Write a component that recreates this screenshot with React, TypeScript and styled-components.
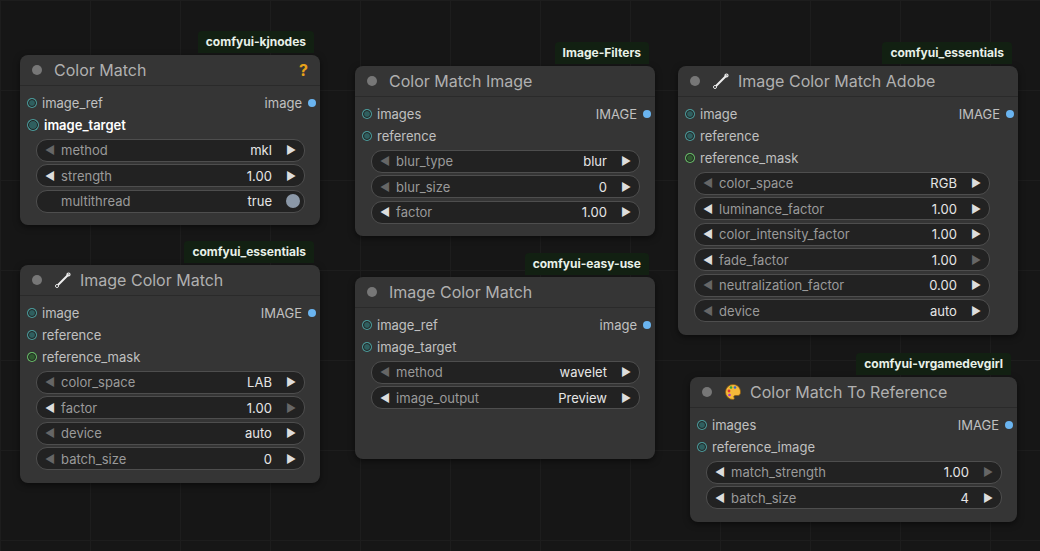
import React from 'react';
import styled, { createGlobalStyle } from 'styled-components';

const Global = createGlobalStyle`
  body { margin: 0; background: #151515; font-family: Inter, "Noto Sans", sans-serif; }
`;

const Canvas = styled.div`
  position: relative;
  width: 1040px;
  height: 551px;
  overflow: hidden;
  background-color: #161616;
  background-image:
    linear-gradient(#1d1d1d 1px, transparent 1px),
    linear-gradient(90deg, #1d1d1d 1px, transparent 1px);
  background-size: 90px 90px;
`;

const Node = styled.div<{ $x: number; $y: number; $w: number }>`
  position: absolute;
  left: ${p => p.$x}px;
  top: ${p => p.$y}px;
  width: ${p => p.$w}px;
  background: #353535;
  border-radius: 8px;
  box-shadow: 0 2px 6px rgba(0,0,0,0.5);
  padding-bottom: 10px;
`;

const Badge = styled.div`
  position: absolute;
  right: 6px;
  top: -24px;
  background: #122012;
  color: #e8f0e8;
  font-size: 12px;
  font-weight: 700;
  padding: 3px 8px 4px;
  border-radius: 4px 4px 0 0;
`;

const Title = styled.div`
  display: flex;
  align-items: center;
  gap: 8px;
  height: 30px;
  padding: 0 12px;
  border-bottom: 1px solid #2a2a2a;
  color: #b0b0b0;
  font-size: 16px;
  margin-bottom: 6px;
`;

const Dot = styled.span`
  width: 10px;
  height: 10px;
  border-radius: 50%;
  background: #777;
  margin-right: 4px;
`;

const Help = styled.span`
  margin-left: auto;
  color: #e7a21a;
  font-weight: 700;
  font-size: 16px;
`;

const Slot = styled.div`
  display: flex;
  align-items: center;
  height: 22px;
  padding: 0 8px;
  color: #c0c0c0;
  font-size: 13px;
`;

const Pin = styled.span<{ $c: string; $ring: string; $big?: boolean }>`
  width: ${p => (p.$big ? 8 : 6)}px;
  height: ${p => (p.$big ? 8 : 6)}px;
  border-radius: 50%;
  background: ${p => p.$c};
  border: 1.5px solid #222;
  margin-right: 6px;
  box-shadow: 0 0 0 1px ${p => p.$ring};
`;

const Out = styled.span`
  margin-left: auto;
  display: flex;
  align-items: center;
  gap: 6px;
  &::after {
    content: '';
    width: 8px;
    height: 8px;
    border-radius: 50%;
    background: #6ab4f0;
    margin-right: -4px;
  }
`;

const Widget = styled.div<{ $mr: number }>`
  display: flex;
  align-items: center;
  height: 21px;
  margin: 2.5px ${p => p.$mr}px 2.5px 16px;
  padding: 0 8px;
  background: #222;
  border: 1px solid #4e4e4e;
  border-radius: 11px;
  font-size: 13px;
  color: #9a9a9a;
  gap: 6px;
`;

const Arrow = styled.span<{ $dim?: boolean }>`
  color: ${p => (p.$dim ? '#666' : '#ddd')};
  font-size: 11px;
`;

const Val = styled.span`
  margin-left: auto;
  color: #e6e6e6;
  margin-right: 8px;
`;

const Toggle = styled.span`
  width: 14px;
  height: 14px;
  border-radius: 50%;
  background: #8b98a8;
  margin-right: -4px;
`;

const Wrench = () => (
  <svg width="18" height="18" viewBox="0 0 18 18">
    <path d="M3 15 L14 4" stroke="#eee" strokeWidth="2" strokeLinecap="round" />
    <circle cx="14.5" cy="3.5" r="1.5" fill="none" stroke="#eee" strokeWidth="1.2" />
    <circle cx="3" cy="15" r="1.5" fill="#111" stroke="#eee" strokeWidth="1" />
  </svg>
);

const Palette = () => (
  <svg width="18" height="18" viewBox="0 0 18 18">
    <path d="M9 1.5a7.5 7.5 0 1 0 0 15c1.5 0 1.6-1.3 1-2-.6-.8 0-2 1.2-2H14c1.6 0 2.5-1.3 2.5-3.5C16.5 4.5 13.2 1.5 9 1.5z" fill="#f5b93a" stroke="#8a5a10" strokeWidth="0.8" />
    <circle cx="5" cy="8" r="1.4" fill="#d33" />
    <circle cx="7" cy="4.5" r="1.3" fill="#3a3" />
    <circle cx="11" cy="4.5" r="1.3" fill="#36c" />
    <circle cx="5.5" cy="12" r="1.3" fill="#a3c" />
  </svg>
);

type W = { n: string; v: string; rDim?: boolean; lDim?: boolean; toggle?: boolean };
type S = { n: string; mask?: boolean; big?: boolean; out?: string };
type N = { x: number; y: number; w: number; mr?: number; badge: string; title: string; icon?: React.ReactNode; help?: boolean; slots: S[]; widgets: W[]; minH?: number };

const nodes: N[] = [
  { x: 20, y: 55, w: 300, badge: 'comfyui-kjnodes', title: 'Color Match', help: true,
    slots: [{ n: 'image_ref', out: 'image' }, { n: 'image_target', big: true }],
    widgets: [{ n: 'method', v: 'mkl', lDim: true }, { n: 'strength', v: '1.00' }, { n: 'multithread', v: 'true', toggle: true }] },
  { x: 20, y: 265, w: 300, badge: 'comfyui_essentials', title: 'Image Color Match', icon: <Wrench />,
    slots: [{ n: 'image', out: 'IMAGE' }, { n: 'reference' }, { n: 'reference_mask', mask: true }],
    widgets: [{ n: 'color_space', v: 'LAB', lDim: true }, { n: 'factor', v: '1.00', rDim: true }, { n: 'device', v: 'auto', lDim: true }, { n: 'batch_size', v: '0', lDim: true }] },
  { x: 355, y: 66, w: 300, badge: 'Image-Filters', title: 'Color Match Image',
    slots: [{ n: 'images', out: 'IMAGE' }, { n: 'reference' }],
    widgets: [{ n: 'blur_type', v: 'blur', lDim: true }, { n: 'blur_size', v: '0', lDim: true }, { n: 'factor', v: '1.00' }] },
  { x: 355, y: 277, w: 300, badge: 'comfyui-easy-use', title: 'Image Color Match', minH: 172,
    slots: [{ n: 'image_ref', out: 'image' }, { n: 'image_target' }],
    widgets: [{ n: 'method', v: 'wavelet', lDim: true }, { n: 'image_output', v: 'Preview' }] },
  { x: 678, y: 66, w: 340, mr: 28, badge: 'comfyui_essentials', title: 'Image Color Match Adobe', icon: <Wrench />,
    slots: [{ n: 'image', out: 'IMAGE' }, { n: 'reference' }, { n: 'reference_mask', mask: true }],
    widgets: [{ n: 'color_space', v: 'RGB', lDim: true }, { n: 'luminance_factor', v: '1.00' }, { n: 'color_intensity_factor', v: '1.00' }, { n: 'fade_factor', v: '1.00', rDim: true }, { n: 'neutralization_factor', v: '0.00', lDim: true }, { n: 'device', v: 'auto', lDim: true }] },
  { x: 690, y: 377, w: 327, badge: 'comfyui-vrgamedevgirl', title: 'Color Match To Reference', icon: <Palette />,
    slots: [{ n: 'images', out: 'IMAGE' }, { n: 'reference_image' }],
    widgets: [{ n: 'match_strength', v: '1.00', rDim: true }, { n: 'batch_size', v: '4' }] },
];

export default function App() {
  return (
    <Canvas>
      <Global />
      {nodes.map(nd => (
        <Node key={nd.x + nd.title} $x={nd.x} $y={nd.y} $w={nd.w} style={nd.minH ? { minHeight: nd.minH } : undefined}>
          <Badge>{nd.badge}</Badge>
          <Title>
            <Dot />
            {nd.icon}
            {nd.title}
            {nd.help && <Help>?</Help>}
          </Title>
          {nd.slots.map(s => (
            <Slot key={s.n} style={s.big ? { color: '#fff', fontWeight: 600 } : undefined}>
              <Pin $c={s.mask ? '#2f5a2f' : '#2f5f5f'} $ring={s.mask ? '#6b6' : '#4a9a9a'} $big={s.big} />
              {s.n}
              {s.out && <Out>{s.out}</Out>}
            </Slot>
          ))}
          {nd.widgets.map(w => (
            <Widget key={w.n} $mr={nd.mr ?? 15}>
              {w.toggle ? <span style={{ width: 10 }} /> : <Arrow $dim={w.lDim}>◀</Arrow>}
              {w.n}
              <Val>{w.v}</Val>
              {w.toggle ? <Toggle /> : <Arrow $dim={w.rDim}>▶</Arrow>}
            </Widget>
          ))}
        </Node>
      ))}
    </Canvas>
  );
}
